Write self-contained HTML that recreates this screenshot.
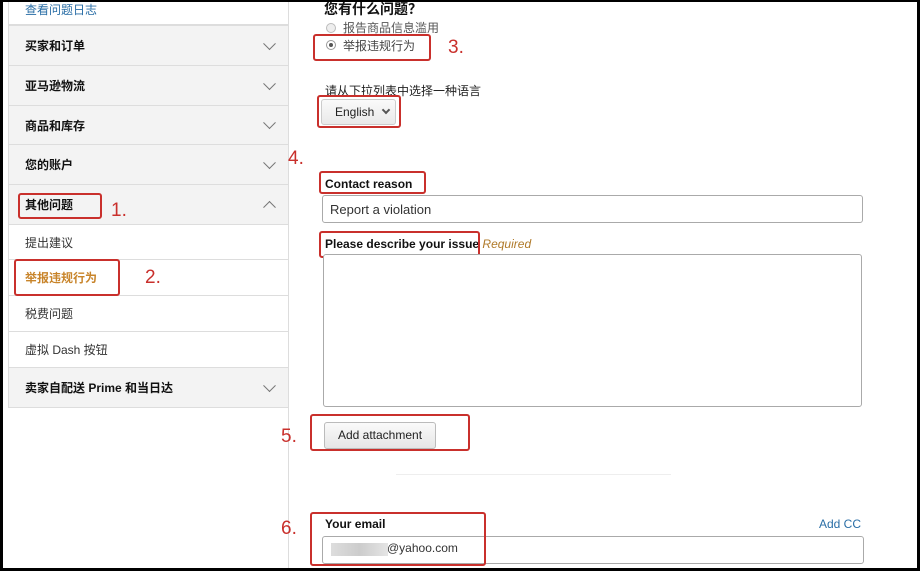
<!DOCTYPE html>
<html><head><meta charset="utf-8"><style>
*{margin:0;padding:0;box-sizing:border-box}
body{width:920px;height:571px;position:relative;overflow:hidden;background:#000;font-family:"Liberation Sans","Noto Sans CJK SC",sans-serif;}
#pg{position:absolute;left:3px;top:2px;width:914px;height:566px;background:#fff;overflow:hidden}
.a{position:absolute}
.row{position:absolute;left:5px;width:280px;border-bottom:1px solid #ddd;background:#f3f3f3;font-size:12px;font-weight:bold;color:#111;padding-left:17px;display:flex;align-items:center}
.row.w{background:#fff;font-weight:normal;color:#333}
.chev{position:absolute;right:14px;top:50%;width:9px;height:9px;border-right:1.5px solid #777;border-bottom:1.5px solid #777;transform:translateY(-75%) rotate(45deg)}
.chev.up{transform:translateY(-25%) rotate(-135deg)}
.red{position:absolute;border:2.5px solid #c9302c;border-radius:3px}
.num{position:absolute;color:#c9302c;font-size:19px}
.inp{position:absolute;border:1px solid #aaa;border-radius:3px;background:#fff}
</style></head><body><div id="pg">
<div class="a" style="left:5px;top:0;width:280px;height:24px;border-bottom:2px solid #ddd"></div>
<div class="a" style="left:22px;top:-1px;font-size:12px;color:#2a6ea6">查看问题日志</div>
<div class="row" style="top:24px;height:40px">买家和订单<span class="chev"></span></div>
<div class="row" style="top:64px;height:40px">亚马逊物流<span class="chev"></span></div>
<div class="row" style="top:104px;height:39px">商品和库存<span class="chev"></span></div>
<div class="row" style="top:143px;height:40px">您的账户<span class="chev"></span></div>
<div class="row" style="top:183px;height:40px">其他问题<span class="chev up"></span></div>
<div class="row w" style="top:223px;height:35px">提出建议</div>
<div class="row w" style="top:258px;height:36px;color:#c8842a;font-weight:bold">举报违规行为</div>
<div class="row w" style="top:294px;height:36px">税费问题</div>
<div class="row w" style="top:330px;height:36px">虚拟 Dash 按钮</div>
<div class="row" style="top:366px;height:40px">卖家自配送 Prime 和当日达<span class="chev"></span></div>
<div class="a" style="left:285px;top:0;width:1px;height:566px;background:#ddd"></div>
<div class="a" style="left:5px;top:0;width:1px;height:406px;background:#ddd"></div>

<div class="red" style="left:15px;top:191px;width:84px;height:26px"></div>
<div class="num" style="left:108px;top:198px">1.</div>
<div class="red" style="left:11px;top:257px;width:106px;height:37px"></div>
<div class="num" style="left:142px;top:265px">2.</div>

<div class="a" style="left:321px;top:-3px;font-size:14px;font-weight:bold;color:#111">您有什么问题？</div>
<div class="a" style="left:323px;top:21px;width:10px;height:10px;border:1px solid #bbb;border-radius:50%;background:#eee"></div>
<div class="a" style="left:340px;top:17px;font-size:12px;color:#555">报告商品信息滥用</div>
<div class="a" style="left:323px;top:38px;width:10px;height:10px;border:1px solid #999;border-radius:50%;background:#fff"><div style="margin:2px;width:4px;height:4px;border-radius:50%;background:#555"></div></div>
<div class="a" style="left:340px;top:35px;font-size:12px;color:#444">举报违规行为</div>
<div class="red" style="left:310px;top:32px;width:118px;height:27px"></div>
<div class="num" style="left:445px;top:35px">3.</div>

<div class="a" style="left:322px;top:80px;font-size:12px;color:#222">请从下拉列表中选择一种语言</div>
<div class="a" style="left:318px;top:97px;width:75px;height:26px;border:1px solid #ccc;border-radius:3px;background:linear-gradient(#fafafa,#e9e9e9);font-size:12px;color:#222;padding:5px 0 0 13px">English <span style="display:inline-block;width:6px;height:6px;border-right:2px solid #555;border-bottom:2px solid #555;transform:rotate(45deg);margin:0 0 3px 5px"></span></div>
<div class="red" style="left:314px;top:93px;width:84px;height:33px"></div>
<div class="num" style="left:285px;top:146px">4.</div>

<div class="a" style="left:322px;top:175px;font-size:12px;font-weight:bold;color:#111">Contact reason</div>
<div class="red" style="left:316px;top:169px;width:107px;height:23px"></div>
<div class="inp" style="left:319px;top:193px;width:541px;height:28px;font-size:13px;color:#333;padding:6px 0 0 7px">Report a violation</div>

<div class="a" style="left:322px;top:235px;font-size:12px;font-weight:bold;color:#111">Please describe your issue <i style="font-weight:normal;color:#b07a2a">Required</i></div>
<div class="red" style="left:316px;top:229px;width:161px;height:27px"></div>
<div class="inp" style="left:320px;top:252px;width:539px;height:153px"></div>

<div class="a" style="left:321px;top:420px;width:112px;height:27px;border:1px solid #bbb;border-radius:3px;background:linear-gradient(#fafafa,#e6e6e6);font-size:12px;color:#222;text-align:center;line-height:25px">Add attachment</div>
<div class="red" style="left:307px;top:412px;width:160px;height:37px"></div>
<div class="num" style="left:278px;top:424px">5.</div>
<div class="a" style="left:393px;top:472px;width:275px;height:1px;background:#eee"></div>

<div class="a" style="left:322px;top:515px;font-size:12px;font-weight:bold;color:#111">Your email</div>
<div class="a" style="left:816px;top:515px;font-size:12px;color:#2a6ea6">Add CC</div>
<div class="inp" style="left:319px;top:534px;width:542px;height:28px"></div>
<div class="a" style="left:328px;top:541px;width:57px;height:13px;background:linear-gradient(90deg,#ddd,#ccc,#e5e5e5)"></div>
<div class="a" style="left:384px;top:539px;font-size:12px;color:#333">@yahoo.com</div>
<div class="red" style="left:307px;top:510px;width:176px;height:54px"></div>
<div class="num" style="left:278px;top:516px">6.</div>
</div></body></html>
